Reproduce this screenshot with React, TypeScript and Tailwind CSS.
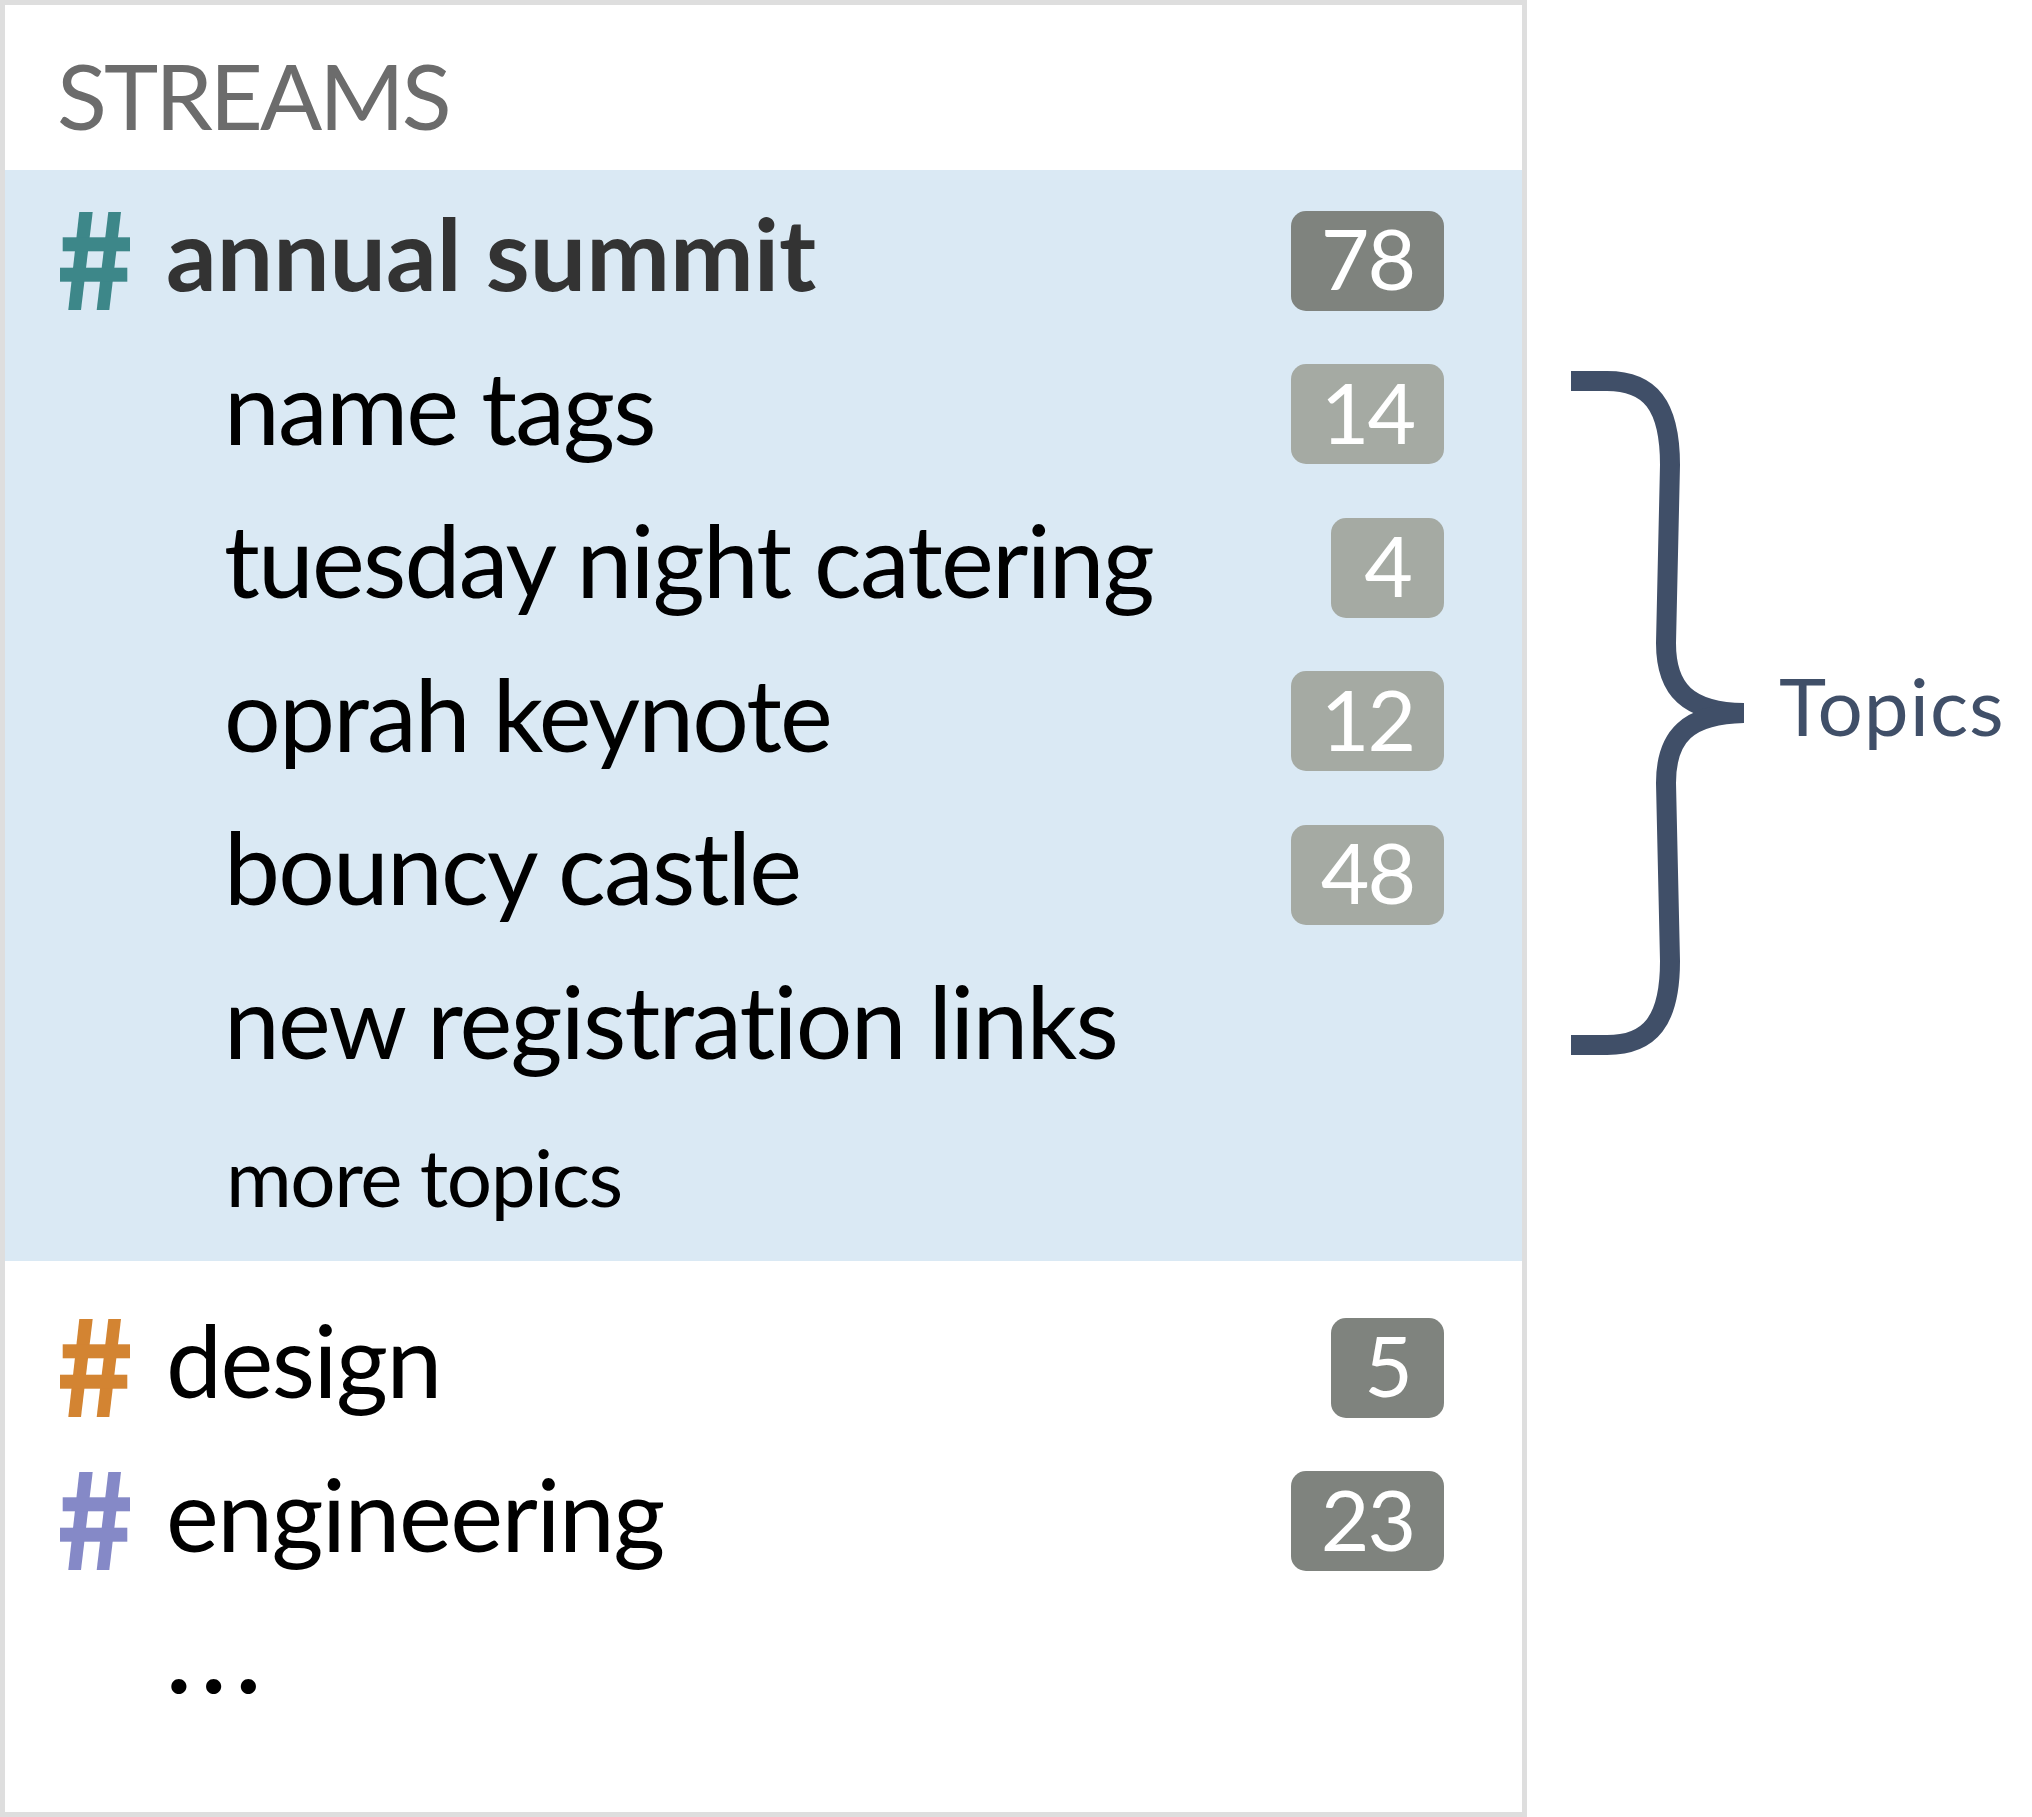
import React from "react";

function Hash({ color }: { color: string }) {
  return (
    <svg width="70" height="98" viewBox="0 0 70 98" className="shrink-0">
      <polygon points="19.3,0 32.7,0 21,98 8.3,98" fill={color} />
      <polygon points="48.3,0 61,0 49.3,98 36.7,98" fill={color} />
      <rect x="2.7" y="25.3" width="67.3" height="14" fill={color} />
      <rect x="0" y="55.7" width="67.3" height="14" fill={color} />
    </svg>
  );
}

function Badge({ n, light }: { n: string; light?: boolean }) {
  return (
    <div
      className={`${n.length === 1 ? "w-[113px]" : "w-[153px]"} h-[100px] shrink-0 rounded-[15px] ${
        light ? "bg-[#a5aaa3]" : "bg-[#7f837e]"
      } flex items-center justify-center text-white text-[84px] leading-none pb-[5px] tracking-[-2px]`}
    >
      {n}
    </div>
  );
}

function StreamRow({
  color,
  name,
  count,
  bold,
}: {
  color: string;
  name: string;
  count: string;
  bold?: boolean;
}) {
  return (
    <div className="h-[153.5px] flex items-center pl-[55px] pr-[78px]">
      <Hash color={color} />
      <span
        className={`ml-[36px] text-[100px] leading-none pb-[17px] ${
          bold ? "font-bold tracking-[0px] text-[#333333]" : "tracking-[-1.5px] text-black"
        }`}
      >
        {name}
      </span>
      <div className="flex-1" />
      <Badge n={count} />
    </div>
  );
}

function TopicRow({ name, count }: { name: string; count?: string }) {
  return (
    <div className="h-[153.5px] flex items-center pl-[219px] pr-[78px]">
      <span className="text-[100px] leading-none pb-[17px] tracking-[-1.8px] text-black">{name}</span>
      <div className="flex-1" />
      {count ? <Badge n={count} light /> : null}
    </div>
  );
}

export default function App() {
  return (
    <div className="w-[2032px] h-[1817px] bg-white flex items-start font-[Lato,sans-serif] [font-variant-ligatures:none]">
      <div className="w-[1527px] h-[1817px] border-[5px] border-[#dedede] flex flex-col shrink-0">
        <div className="h-[165px] pl-[52px] pt-[44px] shrink-0">
          <div className="text-[92px] leading-none tracking-[-3px] text-[#6c6c6c]">STREAMS</div>
        </div>
        <div className="h-[1091px] bg-[#dae9f4] pt-[14px] flex flex-col shrink-0">
          <StreamRow color="#3d8789" name="annual summit" count="78" bold />
          <TopicRow name="name tags" count="14" />
          <TopicRow name="tuesday night catering" count="4" />
          <TopicRow name="oprah keynote" count="12" />
          <TopicRow name="bouncy castle" count="48" />
          <TopicRow name="new registration links" />
          <div className="h-[156px] pl-[221px] pt-[31px]">
            <div className="text-[80px] leading-none tracking-[-1.5px] text-black">more topics</div>
          </div>
        </div>
        <div className="flex flex-col pt-[30px]">
          <StreamRow color="#d38432" name="design" count="5" />
          <StreamRow color="#8589c7" name="engineering" count="23" />
          <div className="pl-[162px] mt-[6px]">
            <div className="text-[100px] leading-none font-bold tracking-[11px] text-black">...</div>
          </div>
        </div>
      </div>
      <div className="pl-[33px] pt-[360px] flex items-center">
        <svg width="184" height="706" viewBox="0 0 184 706" className="shrink-0">
          <path
            d="M 11 21 H 47 C 90 21 110 45 110 105 L 106 283 C 106 330 128 352 184 353"
            fill="none"
            stroke="#404f68"
            strokeWidth="20"
          />
          <path
            d="M 11 685 H 47 C 90 685 110 661 110 601 L 106 423 C 106 376 128 354 184 353"
            fill="none"
            stroke="#404f68"
            strokeWidth="20"
          />
        </svg>
        <span className="ml-[35px] text-[80px] leading-none pb-[16px] tracking-[1px] text-[#404f68]">Topics</span>
      </div>
    </div>
  );
}
